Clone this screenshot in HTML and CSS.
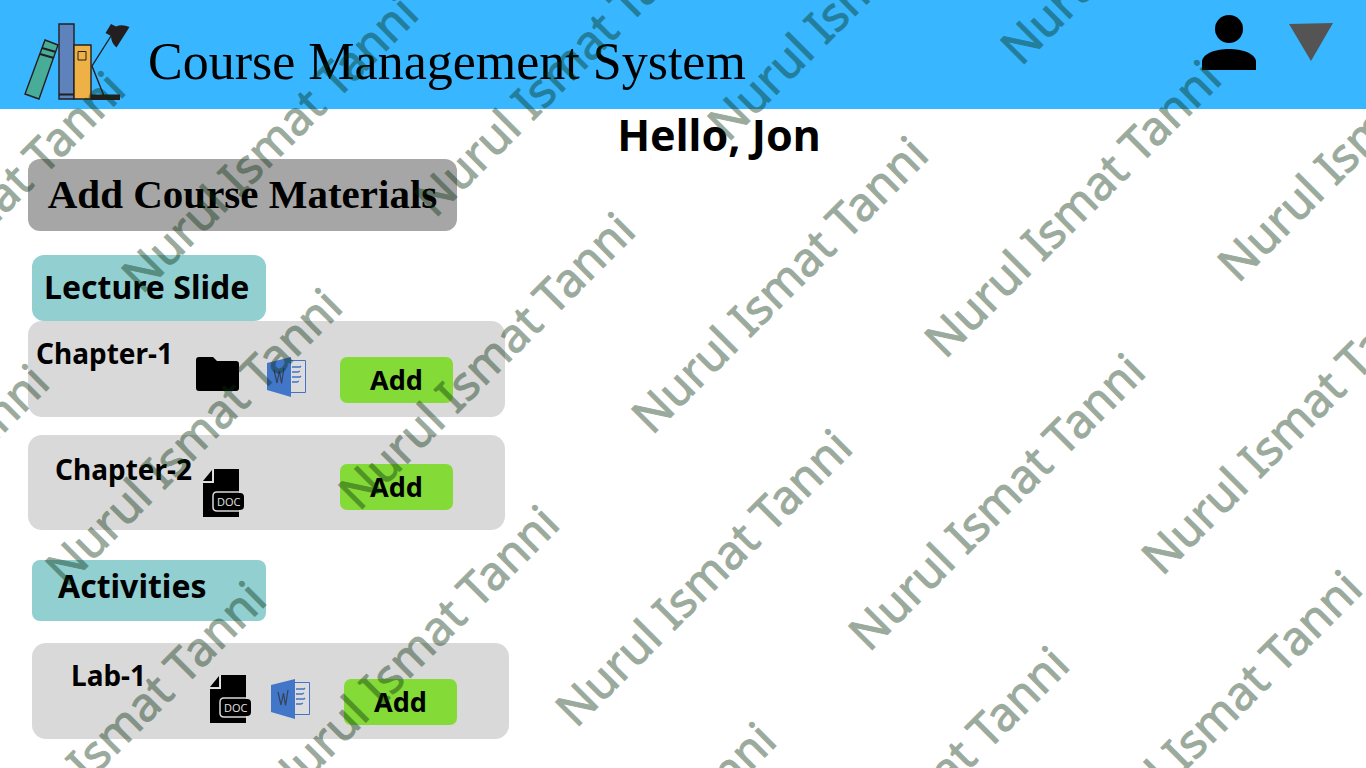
FILE: index.html
```html
<!DOCTYPE html>
<html lang="en">
<head>
<meta charset="utf-8">
<title>Course Management System</title>
<link rel="stylesheet" href="styles.css">
</head>
<body>
<svg class="defs" aria-hidden="true">
  <symbol id="doc" viewBox="0 0 41 48">
    <path d="M0 14V48H36V0H11V14Z"/>
    <path d="M0 12L9 1V12Z"/>
    <path d="M0 13.500H10.500V0" fill="none" stroke="#e4e4e4" stroke-width="1"/>
    <path d="M36 23H14Q10 23 10 27V38Q10 42 14 42H36" stroke="#d9d9d9" stroke-width="1.500"/>
    <rect x="11" y="24" width="30" height="17" rx="4"/>
    <text class="doc-text" x="14" y="37">DOC</text>
  </symbol>
  <symbol id="word" viewBox="0 0 40 40">
    <path d="M24 3.500H38.500V35.500H24" fill="#dcdcdf" stroke="#4472c4" stroke-width="1"/>
    <path d="M25 10h8l1-1M25 15h6l2-1M25 20h8l1-1M25 25h5l2-1" fill="none" stroke="#4472c4" stroke-width="1.300"/>
    <path d="M0 6L24 0V40L0 33Z" fill="#4276c8"/>
    <path d="M7 13l3 13 2.500-12 2 12.500L17 11" fill="none" stroke="#34425c" stroke-width="1.200"/>
  </symbol>
</svg>

<header class="topbar">
  <svg class="logo" viewBox="0 0 106 78" aria-hidden="true">
    <g stroke="#231f20" stroke-width="1.400">
      <path d="M21 17L34 22 15 76 1 71Z" fill="#48ad98"/>
      <path d="M18 25L32 29M16 31L30 35" stroke-width="2"/>
      <path d="M35 1H50V76H35Z" fill="#5e83bc"/>
      <path d="M35 71.500H50" stroke-width="2"/>
      <path d="M50 22H67V76H50Z" fill="#edb146"/>
      <path d="M54 28.500H62V37H54Z" fill="none" stroke-width="1"/>
      <path d="M87 13L68 43 80 73" fill="none"/>
    </g>
    <path d="M67 71.500H96V77H67ZM81.500 10L87 1 92 3.500Q98 1 105.500 4L92.500 24.500Q87 20 87 13Z" fill="#231f20"/>
  </svg>
  <h1 class="title">Course Management System</h1>
  <button class="icon-btn user" aria-label="Profile">
    <svg viewBox="0 0 54 56" width="54" height="56"><circle cx="27" cy="14" r="14"/><path d="M0 55V46C3 30 51 30 54 46V55Z"/></svg>
  </button>
  <button class="icon-btn" aria-label="Menu">
    <svg viewBox="0 0 44 38" width="44" height="38"><path d="M0 1L44 0 22 38Z" fill="#545454"/></svg>
  </button>
</header>

<main class="content">
  <p class="greeting">Hello, Jon</p>
  <h2 class="page-heading">Add Course Materials</h2>

  <section>
    <h3 class="tag">Lecture Slide</h3>
    <div class="card">
      <h4 class="name name-wide">Chapter-1</h4>
      <svg class="slot" viewBox="0 0 43 34" width="43" height="34" aria-hidden="true"><path d="M3 0H17L21 4H40Q43 4 43 7V31Q43 34 40 34H3Q0 34 0 31V3Q0 0 3 0Z"/></svg>
      <svg class="slot" width="40" height="40" aria-hidden="true"><use href="#word"/></svg>
      <button class="add">Add</button>
    </div>
    <div class="card card-second">
      <h4 class="name name-mid">Chapter-2</h4>
      <svg class="slot doc" width="41" height="48" aria-hidden="true"><use href="#doc"/></svg>
      <button class="add">Add</button>
    </div>
  </section>

  <section class="activities">
    <h3 class="tag tag-small">Activities</h3>
    <div class="card card-lab">
      <h4 class="name name-short">Lab-1</h4>
      <svg class="slot doc" width="41" height="48" aria-hidden="true"><use href="#doc"/></svg>
      <svg class="slot" width="40" height="40" aria-hidden="true"><use href="#word"/></svg>
      <button class="add">Add</button>
    </div>
  </section>
</main>

<svg class="watermark" aria-hidden="true">
  <text transform="translate(218 2) rotate(-45)">Nurul Ismat Tanni</text>
  <text transform="translate(-151 371) rotate(-45)">Nurul Ismat Tanni</text>
  <text transform="translate(142 295) rotate(-45)">Nurul Ismat Tanni</text>
  <text transform="translate(435 219) rotate(-45)">Nurul Ismat Tanni</text>
  <text transform="translate(728 143) rotate(-45)">Nurul Ismat Tanni</text>
  <text transform="translate(1021 67) rotate(-45)">Nurul Ismat Tanni</text>
  <text transform="translate(-227 664) rotate(-45)">Nurul Ismat Tanni</text>
  <text transform="translate(66 588) rotate(-45)">Nurul Ismat Tanni</text>
  <text transform="translate(359 512) rotate(-45)">Nurul Ismat Tanni</text>
  <text transform="translate(652 436) rotate(-45)">Nurul Ismat Tanni</text>
  <text transform="translate(945 360) rotate(-45)">Nurul Ismat Tanni</text>
  <text transform="translate(1238 284) rotate(-45)">Nurul Ismat Tanni</text>
  <text transform="translate(-10 881) rotate(-45)">Nurul Ismat Tanni</text>
  <text transform="translate(283 805) rotate(-45)">Nurul Ismat Tanni</text>
  <text transform="translate(576 729) rotate(-45)">Nurul Ismat Tanni</text>
  <text transform="translate(869 653) rotate(-45)">Nurul Ismat Tanni</text>
  <text transform="translate(1162 577) rotate(-45)">Nurul Ismat Tanni</text>
  <text transform="translate(500 1022) rotate(-45)">Nurul Ismat Tanni</text>
  <text transform="translate(793 946) rotate(-45)">Nurul Ismat Tanni</text>
  <text transform="translate(1086 870) rotate(-45)">Nurul Ismat Tanni</text>
</svg>
</body>
</html>
```
FILE: styles.css
```css
* {
  box-sizing: border-box;
}

body {
  margin: 0;
  position: relative;
  min-height: 100vh;
  background: #fff;
  color: #000;
  font-family: "Noto Sans", "Open Sans", sans-serif;
}

h1, h2, h3, h4, p {
  margin: 0;
}

button {
  border: 0;
  padding: 0;
  color: inherit;
  font-family: inherit;
  cursor: pointer;
}

.defs {
  position: absolute;
  width: 0;
  height: 0;
}

.doc-text {
  fill: #e4e4e4;
  font-family: "Open Sans", sans-serif;
  font-size: 11px;
}

.topbar {
  display: flex;
  align-items: flex-start;
  height: 109px;
  padding: 15px 33px 0 24px;
  background: #38b6ff;
}

.logo {
  width: 106px;
  height: 78px;
  margin-top: 8px;
}

.title {
  margin: 17px auto 0 18px;
  font-family: "Liberation Serif", serif;
  font-size: 52px;
  font-weight: 400;
  line-height: 60px;
  white-space: nowrap;
}

.icon-btn {
  background: none;
  margin-top: 8px;
}

.icon-btn svg {
  display: block;
}

.user {
  margin: 0 33px 0 0;
}

.content {
  padding: 0 28px 29px;
}

.greeting {
  padding: 1px 0 0 72px;
  font-size: 43px;
  font-weight: 700;
  line-height: 50px;
  height: 50px;
  text-align: center;
}

.page-heading {
  width: 429px;
  margin-bottom: 24px;
  border-radius: 12px;
  background: #a6a6a6;
  font-family: "Liberation Serif", serif;
  font-size: 41px;
  font-weight: 700;
  line-height: 70px;
  height: 72px;
  text-align: center;
  white-space: nowrap;
}

.tag {
  width: 234px;
  margin-left: 4px;
  padding-left: 12px;
  border-radius: 12px;
  background: #91cfd1;
  font-size: 32px;
  font-weight: 700;
  height: 66px;
  line-height: 64px;
  white-space: nowrap;
}

.tag-small {
  height: 61px;
  padding-left: 26px;
  border-radius: 8px;
  line-height: 52px;
}

.card {
  display: grid;
  grid-template-columns: 168px 71px 73px 113px;
  align-items: start;
  width: 477px;
  height: 96px;
  padding-top: 36px;
  border-radius: 14px;
  background: #d9d9d9;
}

.card-second {
  height: 95px;
  margin-top: 18px;
  padding-top: 29px;
}

.card-lab {
  margin: 22px 0 0 4px;
}

.activities {
  margin-top: 30px;
}

.name {
  font-size: 28px;
  font-weight: 700;
  line-height: 36px;
  margin-top: -22px;
  white-space: nowrap;
}

.name-wide {
  padding-left: 8px;
}

.name-mid {
  margin-top: -13px;
  padding-left: 27px;
}

.name-short {
  padding-left: 39px;
}

.slot {
  display: block;
}

.doc {
  margin: -4px 0 0 10px;
}

.card-second .doc {
  margin: 5px 0 0 7px;
}

.add {
  grid-column: 4;
  height: 46px;
  border-radius: 7px;
  background: #84db38;
  font-size: 27px;
  font-weight: 700;
  line-height: 46px;
}

.watermark {
  position: absolute;
  inset: 0;
  width: 100%;
  height: 100%;
  overflow: hidden;
  pointer-events: none;
  opacity: 0.4;
  fill: #052d0a;
  stroke: #052d0a;
  stroke-width: 1px;
  font-family: "Noto Sans", sans-serif;
  font-size: 47px;
}
```
